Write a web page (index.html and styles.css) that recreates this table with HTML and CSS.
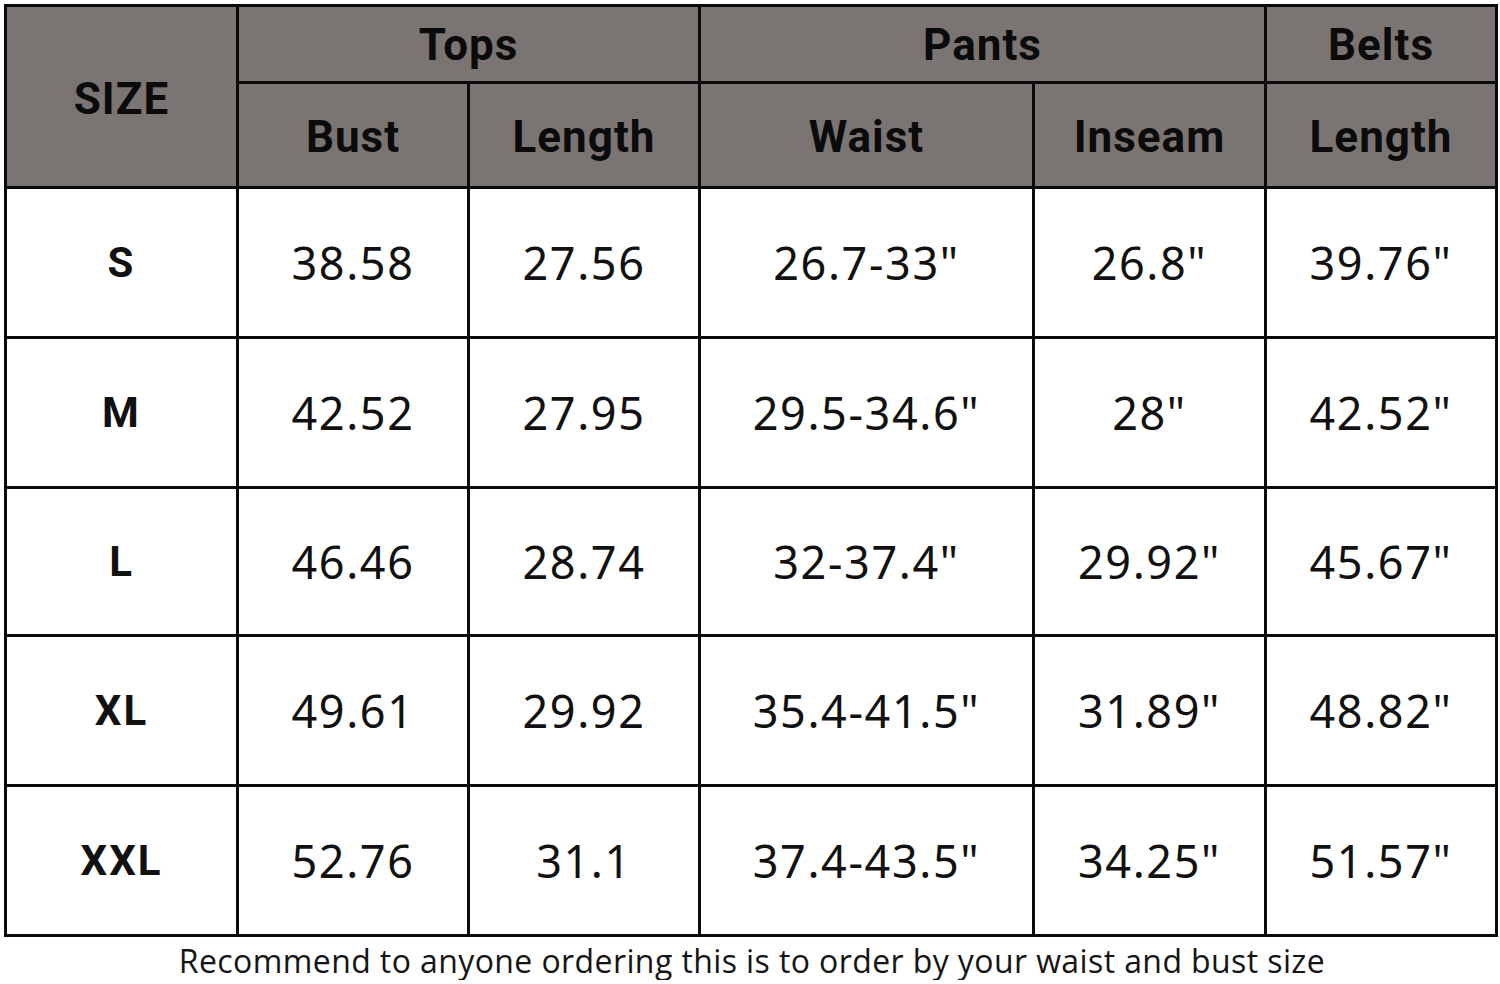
FILE: index.html
```html
<!DOCTYPE html>
<html>
<head>
<meta charset="utf-8">
<link rel="stylesheet" href="styles.css">
</head>
<body>
<div class="page">
  <table class="chart">
    <colgroup>
      <col class="c1"><col class="c2"><col class="c3"><col class="c4"><col class="c5"><col class="c6">
    </colgroup>
    <thead>
      <tr class="h1">
        <th rowspan="2" class="size-head">SIZE</th>
        <th colspan="2">Tops</th>
        <th colspan="2">Pants</th>
        <th>Belts</th>
      </tr>
      <tr class="h2">
        <th>Bust</th>
        <th>Length</th>
        <th>Waist</th>
        <th>Inseam</th>
        <th>Length</th>
      </tr>
    </thead>
    <tbody>
      <tr><td class="sz">S</td><td>38.58</td><td>27.56</td><td>26.7-33"</td><td>26.8"</td><td>39.76"</td></tr>
      <tr><td class="sz">M</td><td>42.52</td><td>27.95</td><td>29.5-34.6"</td><td>28"</td><td>42.52"</td></tr>
      <tr class="short"><td class="sz">L</td><td>46.46</td><td>28.74</td><td>32-37.4"</td><td>29.92"</td><td>45.67"</td></tr>
      <tr><td class="sz">XL</td><td>49.61</td><td>29.92</td><td>35.4-41.5"</td><td>31.89"</td><td>48.82"</td></tr>
      <tr><td class="sz">XXL</td><td>52.76</td><td>31.1</td><td>37.4-43.5"</td><td>34.25"</td><td>51.57"</td></tr>
    </tbody>
  </table>
  <p class="note">Recommend to anyone ordering this is to order by your waist and bust size</p>
</div>
</body>
</html>
```
FILE: styles.css
```css
html, body {
  margin: 0;
  padding: 0;
  background: #ffffff;
}
.page {
  padding: 4px 0 0 4px;
  width: 1500px;
  box-sizing: border-box;
}
.chart {
  border-collapse: collapse;
  table-layout: fixed;
  width: 1491px;
  border: 3px solid #0a0a0a;
}
.c1 { width: 232px; }
.c2 { width: 231px; }
.c3 { width: 231px; }
.c4 { width: 334px; }
.c5 { width: 232px; }
.c6 { width: 231px; }
.chart th, .chart td {
  border: 3px solid #0a0a0a;
  padding: 0;
  text-align: center;
  vertical-align: middle;
}
.chart th {
  background: #7a7472;
  color: #0b0b0b;
  font-family: Roboto, "DejaVu Sans", sans-serif;
  font-weight: 700;
  font-size: 44px;
  letter-spacing: 1px;
  line-height: 1.1;
}
.h1 th { height: 72px; padding-top: 2px; }
.h2 th { height: 98px; padding-top: 4px; }
.chart th.size-head { padding: 6px 0 0 0; }
.chart td {
  background: #ffffff;
  height: 147px;
  font-family: "Noto Sans", "Open Sans", sans-serif;
  font-size: 45px;
  letter-spacing: 1.6px;
  color: #111111;
}
.chart tr.short td { height: 145px; }
.chart td.sz {
  font-family: Roboto, "DejaVu Sans", sans-serif;
  font-weight: 700;
  font-size: 42px;
  letter-spacing: 2px;
}
.note {
  margin: 5px 0 0 0;
  width: 1496px;
  text-align: center;
  font-family: "Open Sans", "Noto Sans", sans-serif;
  font-size: 32px;
  line-height: 38px;
  letter-spacing: 0.4px;
  color: #151515;
}
```
